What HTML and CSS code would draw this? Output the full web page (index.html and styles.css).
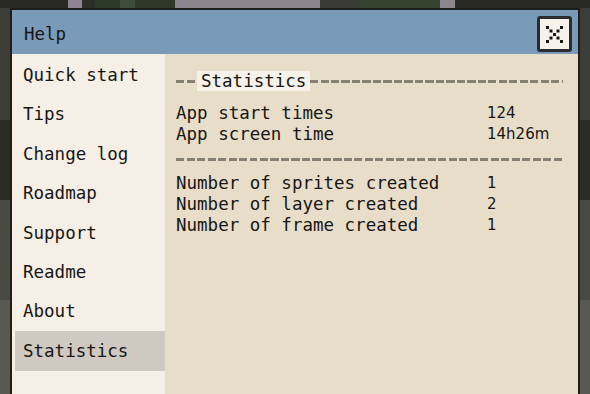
FILE: index.html
```html
<!DOCTYPE html>
<html lang="en">
<head>
  <meta charset="UTF-8" />
  <title>Help</title>
  <link rel="stylesheet" href="styles.css">
</head>
<body>
  <div class="window">
    <!-- Title bar -->
    <div class="titlebar">
      <span class="title">Help</span>
      <button class="close-btn">
        <svg width="17" height="17" viewBox="0 0 17 17">
          <rect x="0" y="0" width="3" height="3" />
          <rect x="3.5" y="3.5" width="3" height="3" />
          <rect x="7" y="7" width="3" height="3" />
          <rect x="10.5" y="10.5" width="3" height="3" />
          <rect x="14" y="14" width="3" height="3" />
          <rect x="14" y="0" width="3" height="3" />
          <rect x="10.5" y="3.5" width="3" height="3" />
          <rect x="3.5" y="10.5" width="3" height="3" />
          <rect x="0" y="14" width="3" height="3" />
        </svg>
      </button>
    </div>

    <div class="window-body">
      <!-- Left menu -->
      <ul class="menu">
        <li>Quick start</li>
        <li>Tips</li>
        <li>Change log</li>
        <li>Roadmap</li>
        <li>Support</li>
        <li>Readme</li>
        <li>About</li>
        <li class="active">Statistics</li>
      </ul>

      <!-- Content -->
      <div class="content">
        <div class="section-head">
          <span class="dash-line lead"></span>
          <span class="label">Statistics</span>
          <span class="dash-line fill"></span>
        </div>

        <div class="stats">
          <span>App start times</span><span class="val">124</span>
          <span>App screen time</span><span class="val">14h26m</span>
        </div>

        <div class="separator"><span class="dash-line fill"></span></div>

        <div class="stats">
          <span>Number of sprites created</span><span class="val">1</span>
          <span>Number of layer created</span><span class="val">2</span>
          <span>Number of frame created</span><span class="val">1</span>
        </div>
      </div>
    </div>
  </div>
</body>
</html>
```

FILE: styles.css
```css
html, body {
  height: 100%;
}

body {
  margin: 0;
  overflow: hidden;
  font-family: 'DejaVu Sans Mono', monospace;
  font-size: 17.5px;
  color: #161614;
  background-color: #33342e;
  background-image:
    linear-gradient(to right,
      #2a2a24 0, #2a2a24 68px,
      #8d8590 68px, #8d8590 82px,
      #2b2f26 82px, #2b2f26 95px,
      #2e3a28 95px, #2e3a28 120px,
      #3f4e38 120px, #3f4e38 135px,
      #2d3826 135px, #2d3826 175px,
      #8b838d 175px, #8b838d 320px,
      #3a3a36 320px, #3a3a36 360px,
      #34442f 360px, #34442f 440px,
      #8d8590 440px, #8d8590 455px,
      #2a2a24 455px),
    linear-gradient(to bottom,
      #3c3d36 0, #3c3d36 120px,
      #2c2c27 120px, #2c2c27 200px,
      #484a42 200px, #484a42 300px,
      #5a5852 300px);
  background-size: 100% 8px, 100% 100%;
  background-repeat: no-repeat;
}

.window {
  margin: 8px 0 0 10px;
  width: 566px;
  height: 420px;
  border: 2px solid #1e1e1c;
  border-bottom: none;
  display: flex;
  flex-direction: column;
}

.titlebar {
  height: 44px;
  background: #7a9aba;
  display: flex;
  align-items: center;
  justify-content: space-between;
  padding: 0 6px 0 12px;
}

.title {
  padding-top: 3px;
}

.close-btn {
  width: 35px;
  height: 36px;
  margin-top: 4px;
  background: #f6f1ea;
  border: 3px solid #2a2b2c;
  border-radius: 3px;
  padding: 0;
  display: flex;
  align-items: center;
  justify-content: center;
}

.close-btn svg {
  fill: #161616;
}

.window-body {
  flex: 1;
  display: flex;
}

.menu {
  list-style: none;
  margin: 0;
  padding: 2px 0 0 3px;
  width: 150px;
  background: #f5efe6;
}

.menu li {
  height: 39.4px;
  line-height: 39.4px;
  padding-left: 8px;
  white-space: nowrap;
}

.menu li.active {
  background: #cfc9c2;
  margin-top: -1px;
  padding-top: 1px;
}

.content {
  flex: 1;
  min-width: 0;
  background: #e8ddc9;
  padding: 17px 15px 0 11px;
}

.section-head {
  display: flex;
  align-items: center;
  height: 20px;
  margin-bottom: 12px;
}

.dash-line {
  height: 3px;
  background: repeating-linear-gradient(to right, #868074 0, #868074 8px, transparent 8px, transparent 10.5px);
}

.dash-line.lead {
  width: 21px;
}

.dash-line.fill {
  flex: 1;
}

.label {
  background: #f6f1e9;
  padding: 0 4px;
  line-height: 20px;
  white-space: nowrap;
}

.stats {
  display: grid;
  grid-template-columns: 311px auto;
  line-height: 21px;
}

.val {
  font-family: 'DejaVu Sans', sans-serif;
  font-size: 15px;
}

.separator {
  display: flex;
  align-items: center;
  height: 21px;
  margin: 4px 0 3px;
}
```
